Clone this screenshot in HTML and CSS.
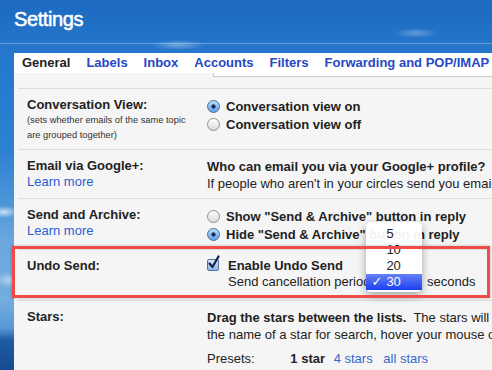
FILE: index.html
```html
<!DOCTYPE html>
<html>
<head>
    <title>Settings</title>
    <meta name="viewport" content="width=device-width, initial-scale=1">
    <link rel="stylesheet" href="styles.css">
</head>
<body>
    <div class="page-header">
        <div class="page-title">Settings</div>
    </div>
    <div class="settings-panel">
        <div class="tab-bar">
            <span class="tab tab-active">General</span>
            <span class="tab">Labels</span>
            <span class="tab">Inbox</span>
            <span class="tab">Accounts</span>
            <span class="tab">Filters</span>
            <span class="tab">Forwarding and POP/IMAP</span>
        </div>
        <div class="tab-edge"></div>
        <div class="settings-rows">
            <div class="setting-row">
                <div class="setting-label">
                    <div class="label-title">Conversation View:</div>
                    <div class="label-note">(sets whether emails of the same topic<br>are grouped together)</div>
                </div>
                <div class="setting-value">
                    <div class="radio-line"><span class="radio radio-on"></span>Conversation view on</div>
                    <div class="radio-line"><span class="radio"></span>Conversation view off</div>
                </div>
            </div>
            <div class="setting-row">
                <div class="setting-label">
                    <div class="label-title">Email via Google+:</div>
                    <div class="learn-more">Learn more</div>
                </div>
                <div class="setting-value">
                    <div class="value-line strong">Who can email you via your Google+ profile?</div>
                    <div class="value-line">If people who aren't in your circles send you email, you'll get it</div>
                </div>
            </div>
            <div class="setting-row">
                <div class="setting-label">
                    <div class="label-title">Send and Archive:</div>
                    <div class="learn-more">Learn more</div>
                </div>
                <div class="setting-value">
                    <div class="radio-line"><span class="radio"></span>Show "Send &amp; Archive" button in reply</div>
                    <div class="radio-line"><span class="radio radio-on"></span>Hide "Send &amp; Archive" button in reply</div>
                </div>
            </div>
            <div class="setting-row row-undo">
                <div class="setting-label">
                    <div class="label-title">Undo Send:</div>
                </div>
                <div class="setting-value">
                    <div class="value-line strong">
                        <span class="checkbox">
                            <svg width="14" height="15" viewBox="0 0 14 15"><path d="M2.5 8.5 L5.5 12 L11.5 1.5" fill="none" stroke="#17224f" stroke-width="2.2" stroke-linecap="round" stroke-linejoin="round"/></svg>
                        </span>Enable Undo Send
                    </div>
                    <div class="value-line indent">Send cancellation period<span class="select-wrap"><span class="select-menu">
                        <span class="menu-item">5</span>
                        <span class="menu-item">10</span>
                        <span class="menu-item">20</span>
                        <span class="menu-item menu-item-selected"><span class="menu-check">✓</span>30</span>
                    </span></span> seconds</div>
                </div>
                <div class="highlight-box"></div>
            </div>
            <div class="setting-row">
                <div class="setting-label">
                    <div class="label-title">Stars:</div>
                </div>
                <div class="setting-value">
                    <div class="value-line"><b>Drag the stars between the lists.</b>&nbsp; The stars will appear in the order listed below.</div>
                    <div class="value-line">the name of a star for search, hover your mouse over the image.</div>
                    <div class="value-line presets">
                        <span class="presets-label">Presets:</span>
                        <b class="preset-one">1 star</b>
                        <span class="preset-link preset-four">4 stars</span>
                        <span class="preset-link">all stars</span>
                    </div>
                </div>
            </div>
        </div>
    </div>
</body>
</html>
```

FILE: styles.css
```css
html, body {
    margin: 0;
    padding: 0;
}
body {
    width: 492px;
    height: 370px;
    overflow: hidden;
    font-family: "Liberation Sans", Arial, sans-serif;
    font-size: 13px;
    color: #222;
    background:
        radial-gradient(ellipse 28px 5px at 178px 45px, rgba(255,255,255,0.35), transparent),
        radial-gradient(ellipse 22px 5px at 416px 33px, rgba(255,255,255,0.3), transparent),
        radial-gradient(ellipse 14px 6px at 4px 212px, rgba(255,255,255,0.7), transparent),
        radial-gradient(ellipse 12px 8px at 8px 280px, rgba(255,255,255,0.45), transparent),
        linear-gradient(180deg, #1c69c0 0px, #2577cc 50px, #2e80d2 150px, #4b94d8 200px, #6ba6de 240px, #74addf 300px, #5a98d6 328px, #1f5ba6 340px, #154b90 370px);
}
.page-header {
    padding: 7px 0 12px 14px;
    border-bottom: 1px solid rgba(255,255,255,0.3);
    margin-bottom: 9px;
}
.page-title {
    font-size: 20px;
    line-height: 24px;
    color: #fff;
    letter-spacing: -0.4px;
    -webkit-text-stroke: 0.5px #fff;
}
.settings-panel {
    margin-left: 14px;
    height: 317px;
    background: #f5f5f5;
}
.tab-bar {
    display: flex;
    height: 20px;
    line-height: 20px;
    background: #fff;
    white-space: nowrap;
}
.tab {
    padding: 0 8px;
    font-weight: bold;
    color: #2747c4;
}
.tab-active {
    color: #222;
}
.tab-edge {
    margin-left: 199px;
    height: 3px;
    background: #fff;
    border-left: 1px solid #ccc;
    border-bottom: 1px solid #ccc;
}
.settings-rows {
    padding-top: 11px;
}
.setting-row {
    position: relative;
    display: grid;
    grid-template-columns: 180px 1fr;
    margin-left: 4px;
    padding: 8px 0 6px 9px;
    border-top: 1px solid #dcdcdc;
}
.label-title {
    font-weight: bold;
    line-height: 16px;
}
.label-note {
    font-size: 9.3px;
    line-height: 15px;
    color: #333;
}
.learn-more {
    line-height: 15px;
    color: #2a5fd0;
}
.setting-value {
    white-space: nowrap;
}
.value-line {
    line-height: 17px;
}
.strong {
    font-weight: bold;
}
.radio-line {
    display: flex;
    align-items: center;
    height: 18px;
    font-weight: bold;
}
.radio {
    width: 13px;
    height: 13px;
    box-sizing: border-box;
    border-radius: 50%;
    border: 1px solid #8f8f8f;
    background: linear-gradient(#ffffff, #d9d9d9);
    margin-right: 6px;
}
.radio-on {
    border-color: #4a6ea8;
    background:
        radial-gradient(circle, #1a2b4f 0 1.8px, transparent 2.4px),
        linear-gradient(#bcdaf7, #5c9fe4);
}
.row-undo {
    padding-bottom: 10px;
}
.row-undo .value-line {
    line-height: 16px;
}
.checkbox {
    position: relative;
    display: inline-block;
    width: 12px;
    height: 12px;
    box-sizing: border-box;
    vertical-align: -1px;
    margin-right: 9px;
    border: 1px solid #55729f;
    border-radius: 2px;
    background: linear-gradient(#dce8f7, #8db5e6);
}
.checkbox svg {
    position: absolute;
    left: -1px;
    top: -5px;
}
.indent {
    padding-left: 21px;
    font-weight: normal;
}
.select-wrap {
    position: relative;
    display: inline-block;
    width: 53px;
    height: 16px;
    vertical-align: top;
}
.select-menu {
    position: absolute;
    left: -4px;
    top: -52px;
    width: 56px;
    padding: 4px 0 2px;
    background: rgba(255,255,255,0.94);
    border-radius: 5px;
    box-shadow: 0 3px 9px rgba(0,0,0,0.35);
    z-index: 2;
}
.menu-item {
    position: relative;
    display: block;
    height: 16px;
    line-height: 16px;
    padding-left: 20px;
    color: #222;
}
.menu-item-selected {
    color: #fff;
    background: linear-gradient(#6582f7, #1c3ff0);
}
.menu-check {
    position: absolute;
    left: 5px;
    font-family: "DejaVu Sans", sans-serif;
    font-size: 13px;
}
.highlight-box {
    position: absolute;
    left: -6px;
    right: 2px;
    top: -4px;
    height: 52px;
    box-sizing: border-box;
    border: 3px solid #f14a47;
    box-shadow: 0 0 3px rgba(0,0,0,0.25);
    z-index: 3;
}
.presets {
    margin-top: 7px;
}
.presets-label {
    margin-right: 32px;
}
.preset-one {
    margin-right: 5px;
}
.preset-four {
    margin-right: 7px;
}
.preset-link {
    color: #3567d0;
}
```
